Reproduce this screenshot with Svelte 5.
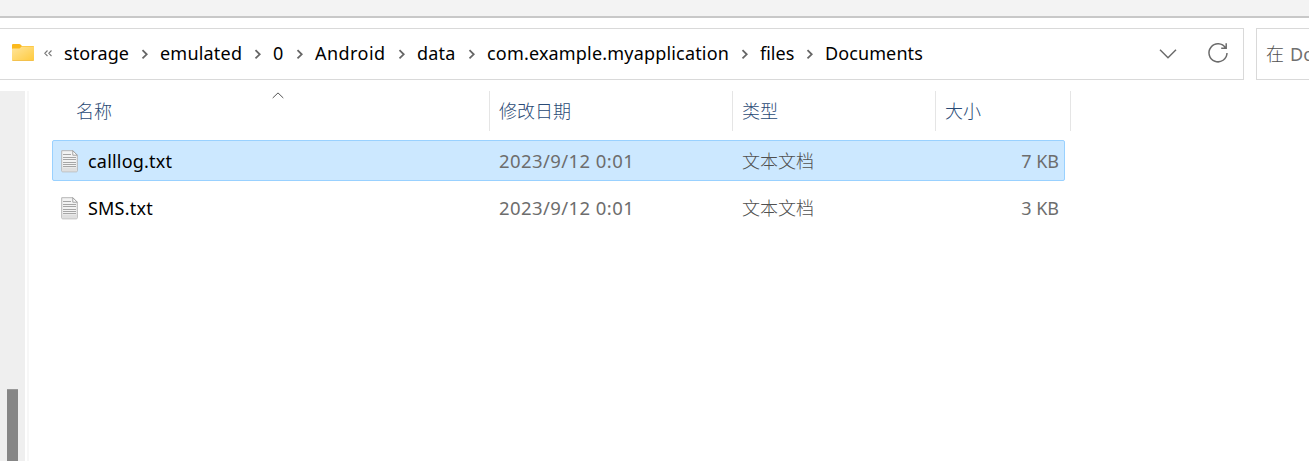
<script>
  const crumbs = [
    { name: 'storage', width: 65, spacing: 0.1 },
    { name: 'emulated', width: 82, spacing: 0.2 },
    { name: '0', width: 11, spacing: 0 },
    { name: 'Android', width: 71, spacing: 0.45 },
    { name: 'data', width: 39, spacing: 0.2 },
    { name: 'com.example.myapplication', width: 242, spacing: 0.18 },
    { name: 'files', width: 34, spacing: 0 },
    { name: 'Documents', width: 98, spacing: 0.1 }
  ];
  const files = [
    { name: 'calllog.txt', date: '2023/9/12 0:01', type: '文本文档', size: '7 KB', selected: true },
    { name: 'SMS.txt', date: '2023/9/12 0:01', type: '文本文档', size: '3 KB', selected: false }
  ];
</script>

<div class="window">
  <div class="toolbar"></div>
  <div class="navigation">
    <div class="address">
      <svg class="folder" width="22" height="18" viewBox="0 0 22 18">
        <defs>
          <linearGradient id="folder-fill" x1="0" y1="0" x2="1" y2="1">
            <stop offset="0" stop-color="#ffe59c" />
            <stop offset="1" stop-color="#ffca3c" />
          </linearGradient>
        </defs>
        <path d="M0 1Q0 0 1 0H7.3Q8 0 8.5 .6L10 2H21Q22 2 22 3V10H0Z" fill="#fbb91d" />
        <path d="M0 5Q0 4.4 .7 4.4H7.5L9.7 2.5H21.3Q22 2.5 22 3.2V16Q22 17 21 17H1Q0 17 0 16Z" fill="url(#folder-fill)" />
        <path d="M.5 16.5H21.5" stroke="#f0bd4b" stroke-width=".8" />
      </svg>
      <svg class="overflow" width="8" height="7" viewBox="0 0 8 7">
        <path d="M3.5 .5L.8 3.3L3.5 6M7.5 .5L4.8 3.3L7.5 6" />
      </svg>
      <div class="crumbs">
        {#each crumbs as crumb, i}
          {#if i > 0}
            <svg class="separator" width="31" height="12" viewBox="0 0 31 12">
              <path d="M13.5 2.2L17.7 6.3L13.5 10.4" />
            </svg>
          {/if}
          <span class="crumb" style:width="{crumb.width}px" style:letter-spacing="{crumb.spacing}px">{crumb.name}</span>
        {/each}
      </div>
      <svg class="dropdown" width="18" height="10" viewBox="0 0 18 10">
        <path d="M1 .8L9 8.8L17 .8" />
      </svg>
      <svg class="refresh" width="22" height="22" viewBox="0 0 22 22">
        <path d="M18.6 6A9 9 0 1 0 20 11M19.2 1.2V6.3H14.2" />
      </svg>
    </div>
    <div class="search"><span class="scope">在</span> Documents 中搜索</div>
  </div>
  <div class="body">
    <div class="scrollbar"><div class="thumb"></div></div>
    <div class="splitter"></div>
    <div class="listing">
      <div class="headings">
        <div class="heading first">
          名称
          <svg class="sort" width="12" height="7" viewBox="0 0 12 7"><path d="M.7 6L6 .9L11.3 6" /></svg>
        </div>
        <div class="heading date">修改日期</div>
        <div class="heading type">类型</div>
        <div class="heading size">大小</div>
      </div>
      {#each files as file}
        <div class="row" class:selected={file.selected}>
          <svg class="document" width="17" height="23" viewBox="0 0 17 23">
            <path d="M.7 .7H11.8L16.3 5.2V20.8Q16.3 21.8 15.3 21.8H1.7Q.7 21.8 .7 20.8Z" fill="#f3f3f3" stroke="#b5b5b5" />
            <path d="M11.8 .7V5.2H16.3Z" fill="#fff" stroke="#999" stroke-width=".9" />
            <path d="M1.2 17.5H15.8V21.3H1.2Z" fill="#dfdfdf" />
            <path d="M2 4.5H10M2 7.5H15M2 9.5H15M2 12.5H15M2 14.5H15M2 16.5H15" stroke="#a6a6a6" />
          </svg>
          <span class="name">{file.name}</span>
          <span class="modified">{file.date}</span>
          <span class="kind">{file.type}</span>
          <span class="bytes">{file.size}</span>
        </div>
      {/each}
    </div>
  </div>
</div>

<style>
  .window {
    width: 100vw;
    height: 461px;
    overflow: hidden;
    display: flex;
    flex-direction: column;
    background: #fff;
    color: #000;
    font: 18px/24px "Noto Sans", "Noto Sans CJK SC", sans-serif;
    white-space: nowrap;
  }
  svg { flex: none; fill: none; }
  .toolbar { height: 16px; flex: none; background: #f3f3f3; border-bottom: 2px solid #c8c8c8; }
  .navigation { display: flex; gap: 12px; padding-top: 10px; flex: none; }
  .address, .search { box-sizing: border-box; height: 52px; border: 1px solid #d9d9d9; display: flex; align-items: center; }
  .address { width: 1244px; flex: none; border-left: 0; padding: 0 14px 0 12px; }
  .folder { margin-top: -2px; }
  .overflow { margin-left: 10px; margin-top: -1px; }
  .overflow path { stroke: #777; stroke-width: 1.1; }
  .crumbs { display: flex; align-items: center; margin-left: 12px; }
  .crumb { flex: none; margin-top: -2px; }
  .separator path { stroke: #666; stroke-width: 1.8; }
  .dropdown { margin-left: auto; margin-top: -1px; }
  .dropdown path { stroke: #6b6b6b; stroke-width: 1.5; }
  .refresh { margin-left: 30px; margin-top: -2px; }
  .refresh path { stroke: #6b6b6b; stroke-width: 1.5; }
  .search { flex: 1; min-width: 0; overflow: hidden; border-right: 0; padding-left: 9px; color: #707070; }
  .scope { margin-right: 6px; color: #505050; font-weight: 300; }
  .body { flex: 1; display: flex; margin-top: 11px; }
  .scrollbar { width: 18px; padding: 298px 0 0 7px; background: #efefef; }
  .thumb { width: 11px; height: 72px; background: #868686; border-top: 1px solid #999; box-sizing: border-box; }
  .splitter { width: 2px; margin: 0 23px 0 2px; background: #f7f7f7; }
  .listing { width: 1019px; }
  .headings { display: flex; height: 40px; margin-bottom: 9px; color: #2a4a75; font-weight: 300; }
  .heading { position: relative; box-sizing: border-box; border-right: 1px solid #e5e5e5; padding: 8px 0 0 9px; }
  .first { width: 438px; padding-left: 24px; }
  .date { width: 243px; }
  .type { width: 203px; }
  .size { width: 135px; }
  .sort { position: absolute; left: 220px; top: 1px; }
  .sort path { stroke: #555; stroke-width: 1; }
  .row { box-sizing: border-box; width: 1013px; height: 41px; display: flex; align-items: center; margin-bottom: 6px; border: 1px solid transparent; border-radius: 2px; padding: 0 5px 0 8px; color: #6d6d6d; }
  .selected { background: #cce8ff; border-color: #99d1ff; }
  .document { margin-top: 1px; }
  .name { width: 411px; margin-left: 10px; color: #000; letter-spacing: .2px; }
  .modified { width: 243px; font-size: 18.5px; letter-spacing: .42px; }
  .kind { width: 203px; color: #505050; font-weight: 300; }
  .bytes { flex: 1; text-align: right; }
</style>
